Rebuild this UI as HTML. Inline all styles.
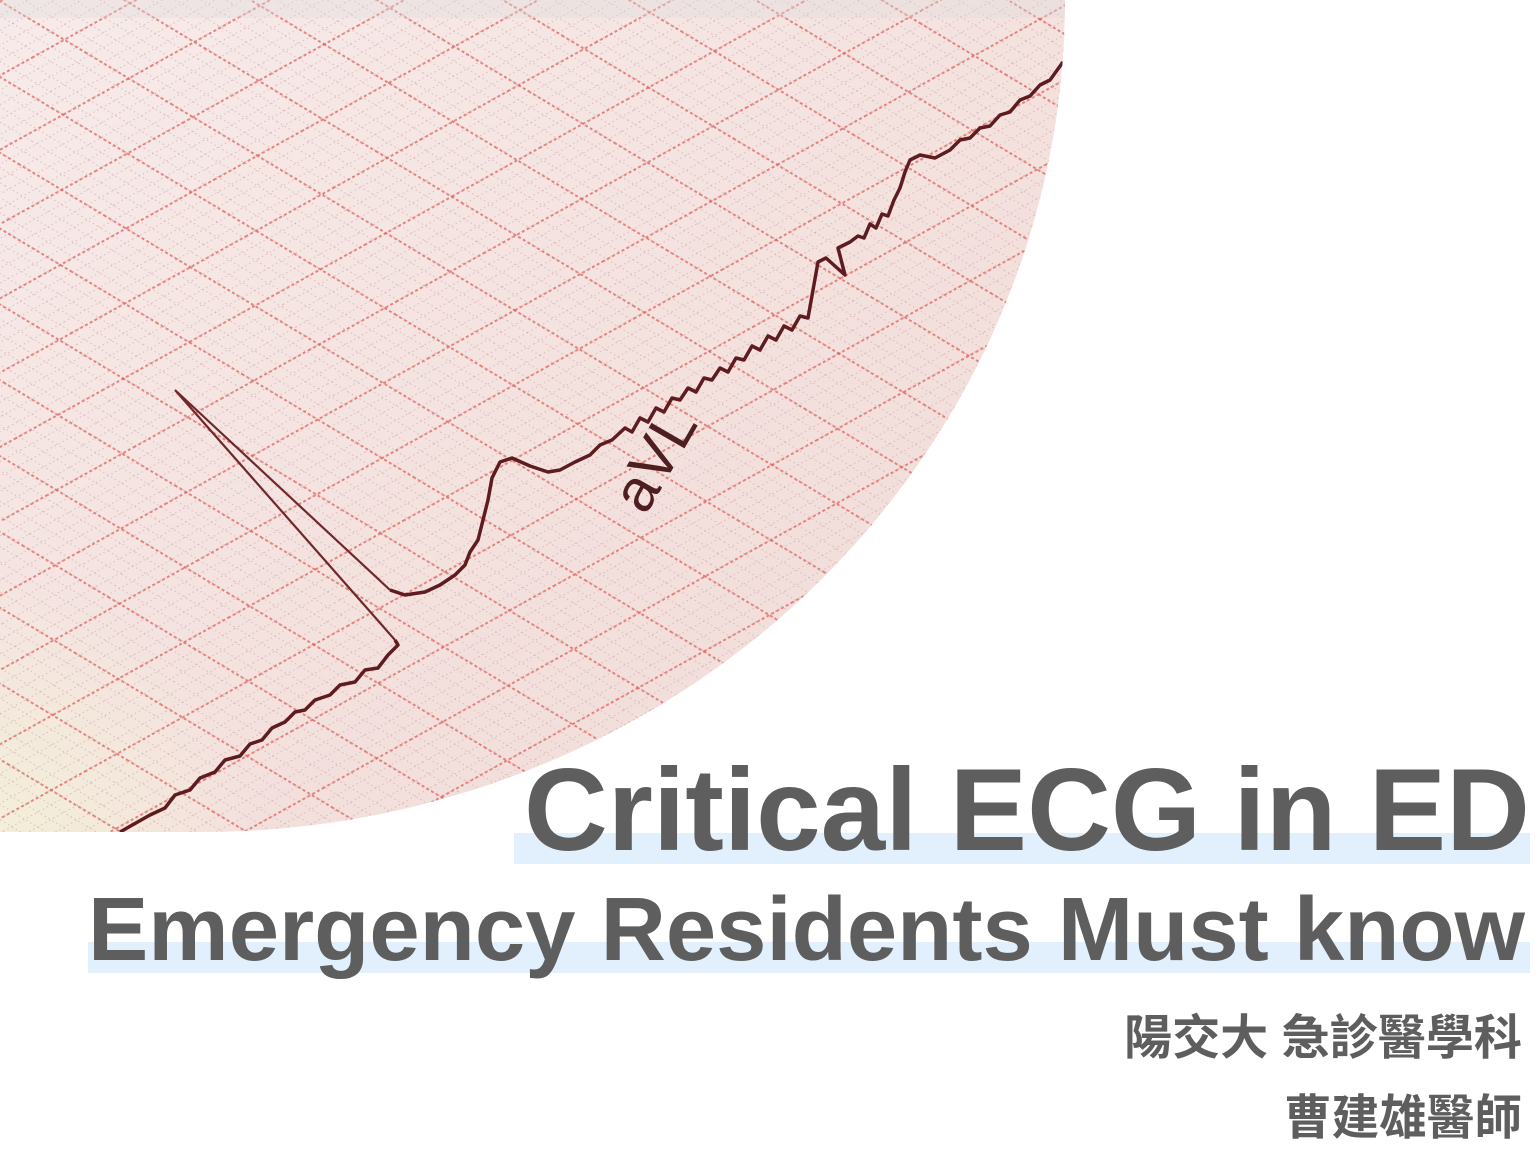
<!DOCTYPE html>
<html><head><meta charset="utf-8"><style>
html,body{margin:0;padding:0;background:#fff;width:1540px;height:1154px;overflow:hidden}
svg{display:block}
</style></head><body>
<svg width="1540" height="1154" viewBox="0 0 1540 1154" xmlns="http://www.w3.org/2000/svg">
<defs>
<clipPath id="c"><path d="M0 0 H1065 V0 A863 832 0 0 1 202 832 H0 Z"/></clipPath>
<pattern id="mA" width="100" height="13" patternUnits="userSpaceOnUse" patternTransform="rotate(31)">
<line x1="0" y1="0.5" x2="100" y2="0.5" stroke="#c08f95" stroke-width="1.2" stroke-dasharray="1.5 3" opacity="0.45"/></pattern>
<pattern id="mB" width="100" height="13" patternUnits="userSpaceOnUse" patternTransform="rotate(-29)">
<line x1="0" y1="0.5" x2="100" y2="0.5" stroke="#c08f95" stroke-width="1.2" stroke-dasharray="1.5 3" opacity="0.45"/></pattern>
<pattern id="A" width="100" height="65" patternUnits="userSpaceOnUse" patternTransform="rotate(31)">
<line x1="0" y1="1" x2="100" y2="1" stroke="#e0605a" stroke-width="2" stroke-dasharray="3 2.5" opacity="0.7"/></pattern>
<pattern id="B" width="100" height="65" patternUnits="userSpaceOnUse" patternTransform="rotate(-29)">
<line x1="0" y1="1" x2="100" y2="1" stroke="#e0605a" stroke-width="2" stroke-dasharray="3 2.5" opacity="0.7"/></pattern>
<linearGradient id="bg" x1="0" y1="0" x2="1" y2="1">
<stop offset="0" stop-color="#f7ebea"/><stop offset="0.5" stop-color="#f4e2df"/><stop offset="1" stop-color="#f0dbd8"/></linearGradient>
<radialGradient id="yel" cx="0" cy="832" r="250" gradientUnits="userSpaceOnUse">
<stop offset="0" stop-color="#f3efd9"/><stop offset="1" stop-color="#f3efd9" stop-opacity="0"/></radialGradient>
</defs>
<g clip-path="url(#c)">
<rect width="1065" height="832" fill="url(#bg)"/>
<rect width="1065" height="832" fill="url(#yel)"/>
<rect width="1065" height="832" fill="url(#mA)"/>
<rect width="1065" height="832" fill="url(#mB)"/>
<rect width="1065" height="832" fill="url(#A)"/>
<rect width="1065" height="832" fill="url(#B)"/>
<rect width="1065" height="18" fill="#ddd" opacity="0.35"/>
<path fill="none" stroke="#5e1c20" stroke-width="3.5" stroke-linejoin="round" d="M120 832 L150 815 165 808 175 795 190 790 200 778 215 772 225 760 240 756 250 744 262 740 272 728 285 722 295 712 305 710 315 700 330 695 340 685 355 682 365 670 378 668 388 655 398 645 L395 640"/>
<path fill="none" stroke="#70282b" stroke-width="2.2" d="M395 640 L175 390 L390 590"/>
<path fill="none" stroke="#5e1c20" stroke-width="3.5" stroke-linejoin="round" d="M390 590 L405 595 425 592 440 585 455 575 465 565 470 552 478 540 483 520 488 500 492 478 500 462 512 458 530 466 548 472 560 470 575 462 590 455 600 445 612 440 625 428 632 432 640 418 648 422 656 408 664 412 672 398 680 400 688 388 696 392 704 378 712 380 720 368 728 372 736 358 744 360 752 346 760 350 768 336 776 340 784 326 792 330 800 316 808 318 818 262 826 258 845 275 838 248 850 242 858 236 864 238 870 224 876 228 882 214 888 216 894 200 900 188 905 172 910 160 920 155 935 158 950 150 960 140 970 138 980 128 990 126 1000 115 1010 112 1020 100 1030 96 1040 85 1050 80 1063 62"/>
<text x="0" y="0" transform="translate(672,470) rotate(-60)" text-anchor="middle" font-family="Liberation Sans, sans-serif" font-size="60" fill="#4e1e20">aVL</text>
</g>
<rect x="514" y="833" width="1016" height="31" fill="#e2effd"/>
<rect x="88" y="942" width="1442" height="31" fill="#e2effd"/>
<text x="524" y="850" textLength="1006" lengthAdjust="spacingAndGlyphs" font-family="Liberation Sans, sans-serif" font-weight="bold" font-size="117" fill="#5e5e5e">Critical ECG in ED</text>
<text x="88" y="960" textLength="1437" lengthAdjust="spacingAndGlyphs" font-family="Liberation Sans, sans-serif" font-weight="bold" font-size="90" fill="#5e5e5e">Emergency Residents Must know</text>
<text x="1124" y="1054" textLength="398" lengthAdjust="spacingAndGlyphs" font-family="Liberation Sans, 'Noto Sans CJK TC', sans-serif" font-weight="bold" font-size="48" fill="#5e5e5e">陽交大 急診醫學科</text>
<text x="1284" y="1134" textLength="238" lengthAdjust="spacingAndGlyphs" font-family="Liberation Sans, 'Noto Sans CJK TC', sans-serif" font-weight="bold" font-size="48" fill="#5e5e5e">曹建雄醫師</text>
</svg>
</body></html>
